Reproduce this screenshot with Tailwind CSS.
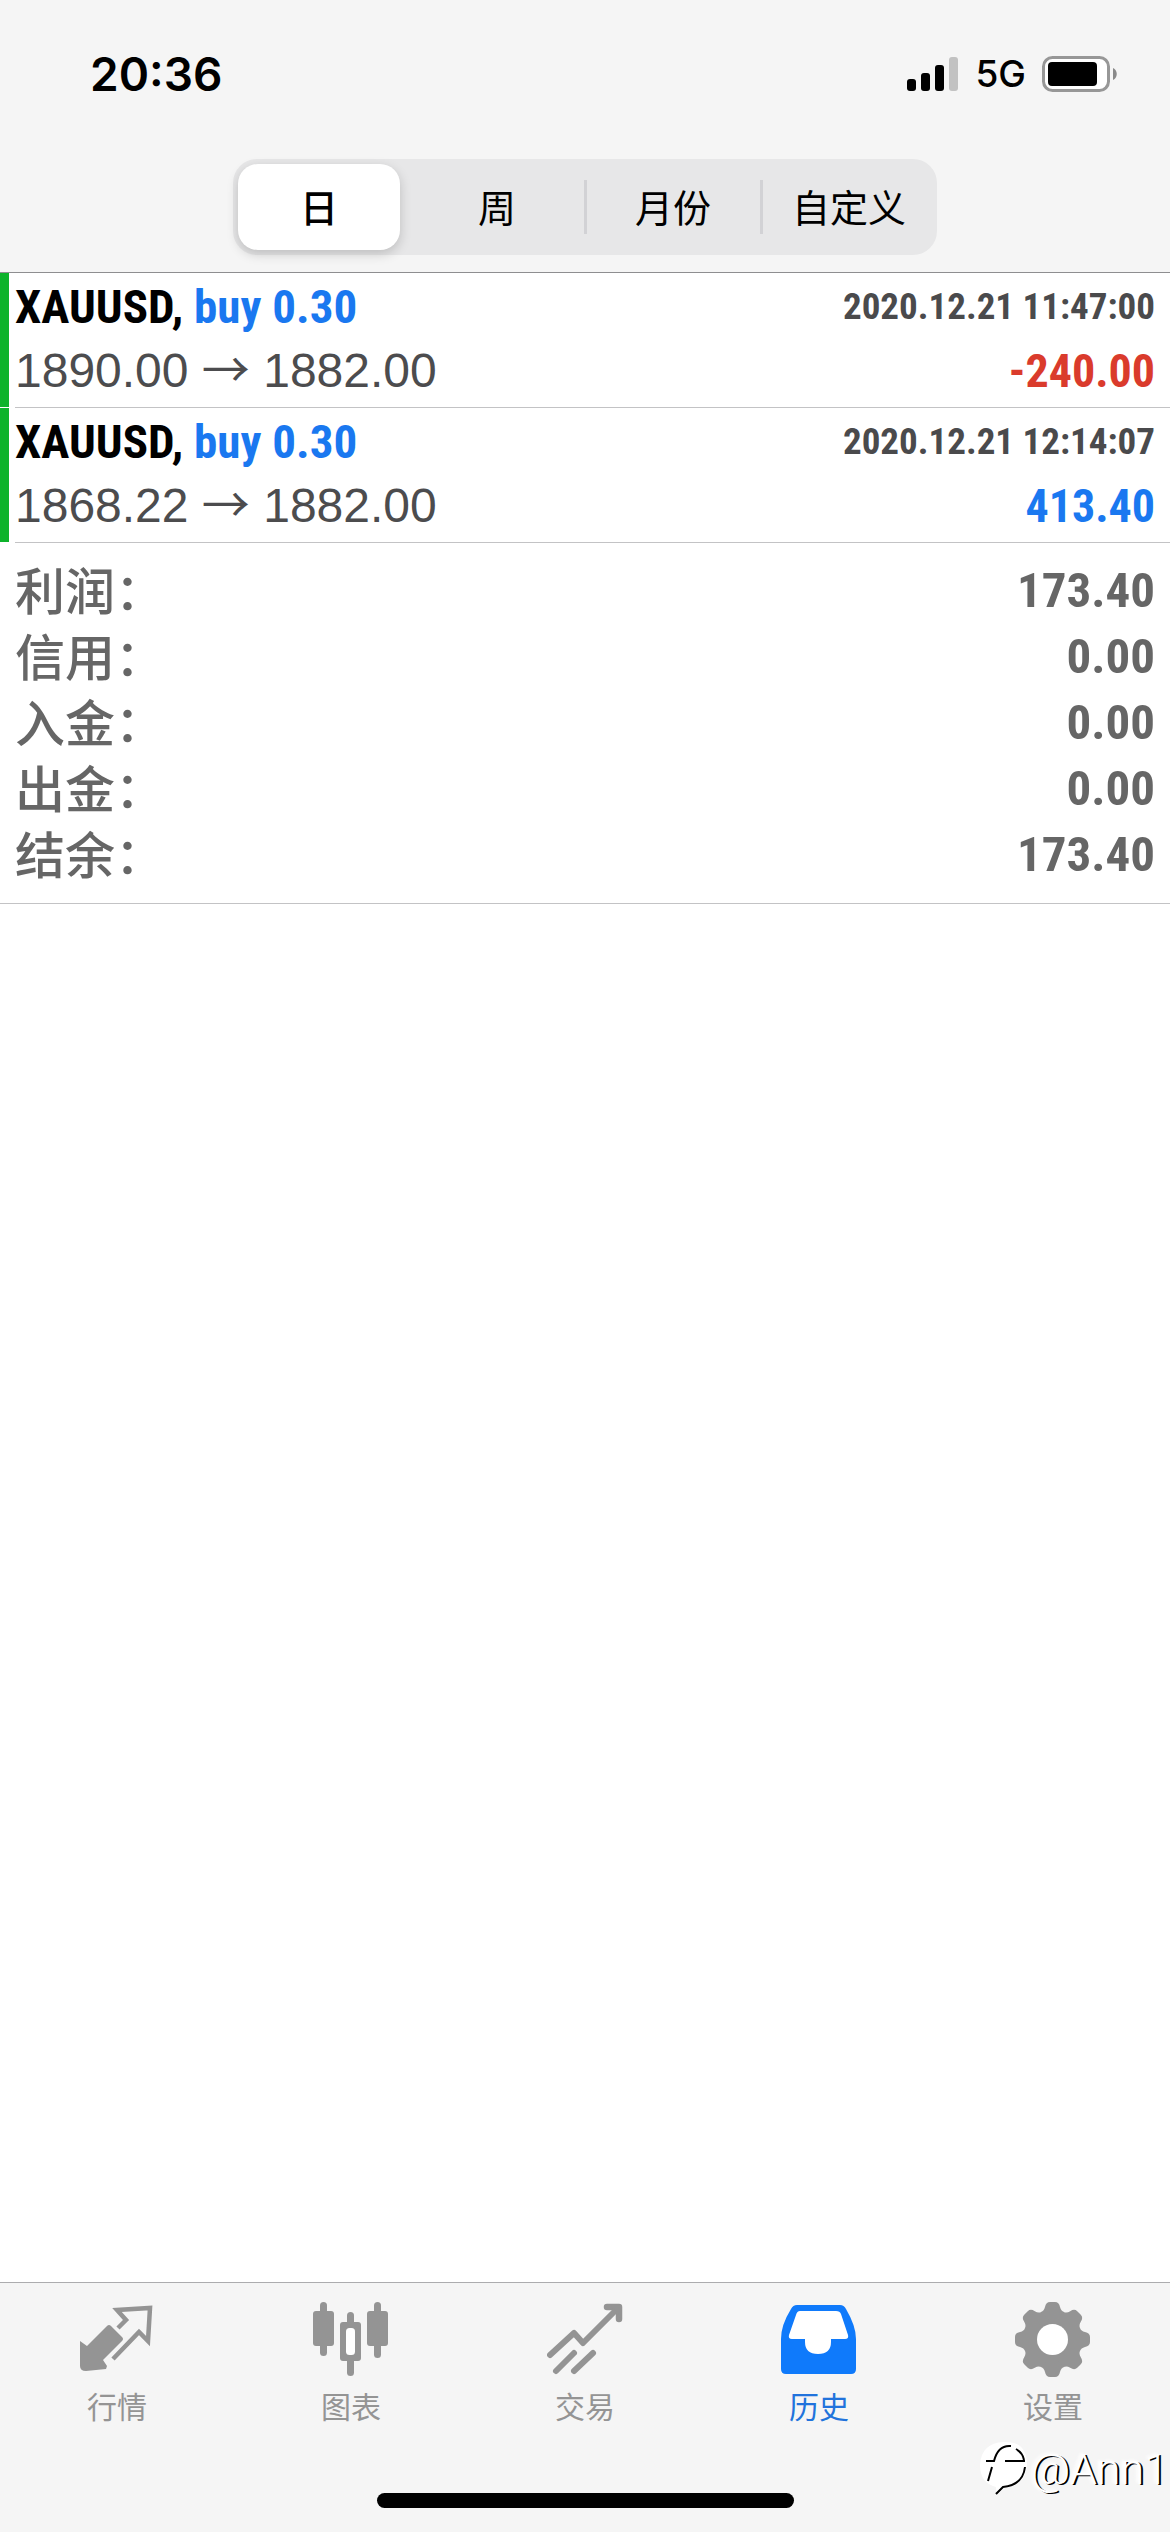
<!DOCTYPE html>
<html lang="zh-CN">
<head>
<meta charset="utf-8">
<meta name="viewport" content="width=device-width, initial-scale=1">
<title>历史</title>
<script src="https://cdn.jsdelivr.net/npm/@tailwindcss/browser@4"></script>
</head>
<body class="flex min-h-screen flex-col bg-white font-['Liberation_Sans','Noto_Sans_CJK_SC',sans-serif] text-black">

<header class="border-b border-[#8e8e90] bg-[#f5f5f5] pb-[17px]">
  <!-- Status bar -->
  <div class="flex items-center justify-between pt-[46px] pr-[52px] pl-[90px] font-['Inter',sans-serif]">
    <time class="text-[46px] leading-[56px] font-semibold">20:36</time>
    <div class="flex items-center">
      <svg class="mr-[16px] h-[36px] w-[52px]" viewBox="0 0 52 36" aria-hidden="true">
        <rect x="0" y="23" width="9" height="12" rx="3"/>
        <rect x="14" y="17" width="9" height="18" rx="3"/>
        <rect x="28" y="9" width="9" height="26" rx="3"/>
        <rect x="42" y="1" width="9" height="34" rx="3" fill="#c2c2c2"/>
      </svg>
      <span class="mr-[16px] text-[37px] leading-[56px] font-medium">5G</span>
      <svg class="h-[36px] w-[76px]" viewBox="0 0 76 36" aria-hidden="true">
        <rect x="1.500" y="1.500" width="65" height="33" rx="9" fill="#fff" stroke="#979797" stroke-width="3"/>
        <rect x="6" y="6" width="49" height="24" rx="4"/>
        <path d="M71 12c5 2 5 10 0 12z" fill="#8a8a8a"/>
      </svg>
    </div>
  </div>
  <!-- Period switch -->
  <div class="mx-auto mt-[57px] grid h-[96px] w-[704px] max-w-full grid-cols-4 rounded-[24px] bg-[#e7e7e8] text-[38px] font-['Noto_Sans_CJK_SC',sans-serif]">
    <button class="my-[5px] mr-[9px] ml-[5px] rounded-[20px] bg-white pb-[4px] font-medium shadow-[0_4px_12px_rgba(0,0,0,0.18)]">日</button>
    <button class="pb-[4px]">周</button>
    <button class="relative pb-[4px] before:absolute before:top-[21px] before:bottom-[21px] before:-left-px before:w-[3px] before:bg-[#d2d2d5]">月份</button>
    <button class="relative pb-[4px] before:absolute before:top-[21px] before:bottom-[21px] before:-left-px before:w-[3px] before:bg-[#d2d2d5]">自定义</button>
  </div>
</header>

<main class="flex-1">
  <ul class="leading-[64px]">
    <li class="flex">
      <div class="mb-px w-[9px] bg-[#0db32b]"></div>
      <div class="ml-[6px] flex-1 border-b border-[#c3c3c5] pt-[2px] pr-[15px] pb-[4px]">
        <div class="flex justify-between font-['Roboto_Condensed','Roboto',sans-serif] font-bold">
          <h2 class="text-[47px]">XAUUSD, <span class="text-[#1a78f0]">buy 0.30</span></h2>
          <time class="text-[37px] text-[#4a4a4c]">2020.12.21 11:47:00</time>
        </div>
        <div class="flex justify-between text-[48px]">
          <p class="text-[#4c4c4e]">1890.00 <span class="font-['Noto_Sans_CJK_SC',sans-serif] leading-none">→</span> 1882.00</p>
          <p class="text-[46px] font-['Roboto_Condensed','Roboto',sans-serif] font-bold text-[#da3b2c]">-240.00</p>
        </div>
      </div>
    </li>
    <li class="flex">
      <div class="mb-px w-[9px] bg-[#0db32b]"></div>
      <div class="ml-[6px] flex-1 border-b border-[#c3c3c5] pt-[2px] pr-[15px] pb-[4px]">
        <div class="flex justify-between font-['Roboto_Condensed','Roboto',sans-serif] font-bold">
          <h2 class="text-[47px]">XAUUSD, <span class="text-[#1a78f0]">buy 0.30</span></h2>
          <time class="text-[37px] text-[#4a4a4c]">2020.12.21 12:14:07</time>
        </div>
        <div class="flex justify-between text-[48px]">
          <p class="text-[#4c4c4e]">1868.22 <span class="font-['Noto_Sans_CJK_SC',sans-serif] leading-none">→</span> 1882.00</p>
          <p class="text-[46px] font-['Roboto_Condensed','Roboto',sans-serif] font-bold text-[#1a78f0]">413.40</p>
        </div>
      </div>
    </li>
  </ul>

  <!-- Totals -->
  <dl class="border-b border-[#c3c3c5] px-[15px] py-[15px] text-[#666]">
    <div class="flex h-[66px] justify-between"><dt class="text-[50px] leading-[60px] font-medium font-['Noto_Sans_CJK_SC',sans-serif]">利润：</dt><dd class="text-[49px] leading-[66px] font-bold font-['Roboto_Condensed','Roboto',sans-serif]">173.40</dd></div>
    <div class="flex h-[66px] justify-between"><dt class="text-[50px] leading-[60px] font-medium font-['Noto_Sans_CJK_SC',sans-serif]">信用：</dt><dd class="text-[49px] leading-[66px] font-bold font-['Roboto_Condensed','Roboto',sans-serif]">0.00</dd></div>
    <div class="flex h-[66px] justify-between"><dt class="text-[50px] leading-[60px] font-medium font-['Noto_Sans_CJK_SC',sans-serif]">入金：</dt><dd class="text-[49px] leading-[66px] font-bold font-['Roboto_Condensed','Roboto',sans-serif]">0.00</dd></div>
    <div class="flex h-[66px] justify-between"><dt class="text-[50px] leading-[60px] font-medium font-['Noto_Sans_CJK_SC',sans-serif]">出金：</dt><dd class="text-[49px] leading-[66px] font-bold font-['Roboto_Condensed','Roboto',sans-serif]">0.00</dd></div>
    <div class="flex h-[66px] justify-between"><dt class="text-[50px] leading-[60px] font-medium font-['Noto_Sans_CJK_SC',sans-serif]">结余：</dt><dd class="text-[49px] leading-[66px] font-bold font-['Roboto_Condensed','Roboto',sans-serif]">173.40</dd></div>
  </dl>
</main>

<footer class="relative border-t border-[#acacae] bg-[#f5f5f5] pt-[17px] pb-[24px]">
  <nav class="grid grid-cols-5 text-[30px] leading-[44px] text-[#949494] font-['Noto_Sans_CJK_SC',sans-serif]">
    <a href="#quotes" class="flex flex-col items-center gap-[5px]">
      <svg class="h-[78px] w-[76px]" viewBox="0 0 76 78" aria-hidden="true">
        <path d="M1 41l7 5 20-20q2-2 4 0l11 11q2 2 0 4L24 60l4 6-1 3-20 2q-6 0-6-5z" fill="#949494"/>
        <path d="M39 28l8-8-9-10 33-2-2 33-9-9-26 27" fill="none" stroke="#949494" stroke-width="4.500"/>
      </svg>
      行情
    </a>
    <a href="#charts" class="flex flex-col items-center gap-[5px]">
      <svg class="h-[78px] w-[76px]" viewBox="0 0 76 78" fill="#949494" aria-hidden="true">
        <rect x="7" y="2" width="7" height="54" rx="3.500"/><rect x="0" y="11" width="21" height="35" rx="3"/>
        <rect x="61" y="2" width="7" height="56" rx="3.500"/><rect x="54" y="11" width="21" height="35" rx="3"/>
        <rect x="34" y="12" width="7" height="64" rx="3.500"/><rect x="27" y="22" width="21" height="39" rx="3"/>
        <rect x="33" y="28" width="9" height="27" rx="3.500" fill="#fff"/>
      </svg>
      图表
    </a>
    <a href="#trade" class="flex flex-col items-center gap-[5px]">
      <svg class="h-[78px] w-[76px]" viewBox="0 0 76 78" fill="none" stroke="#949494" stroke-width="6" stroke-linecap="round" stroke-linejoin="round" aria-hidden="true">
        <path d="M3 55l24-22 9 10L71 8"/>
        <path d="M60 7h12v12" stroke-width="6.500"/>
        <path d="M65 7h8v10z" fill="#949494" stroke-width="2"/>
        <path d="M9 71l18-18M27 71l19-18"/>
      </svg>
      交易
    </a>
    <a href="#history" aria-current="page" class="flex flex-col items-center gap-[5px] text-[#2173dc]">
      <svg class="h-[78px] w-[76px]" viewBox="0 0 76 78" aria-hidden="true">
        <path d="M16 5h43q4 0 6 4 10 17 10 30v30q0 5-5 5H5q-5 0-5-5V39Q0 25 10 9q2-4 6-4z" fill="#0f7afb"/>
        <path d="M19 11h36q4 0 5 3l7 21q1 4-3 4H50v3q0 12-13 12T24 42v-3H11q-4 0-3-4l7-20q1-4 4-4z" fill="#fff"/>
      </svg>
      历史
    </a>
    <a href="#settings" class="flex flex-col items-center gap-[5px]">
      <svg class="h-[78px] w-[76px]" viewBox="0 0 76 78" aria-hidden="true">
        <g fill="#949494">
          <circle cx="37.500" cy="39.500" r="29"/>
          <path id="cog" d="M26 12q3-1 4-5 1-5 5-5h5q4 0 5 5 1 4 4 5v55q-3 1-4 5-1 5-5 5h-5q-4 0-5-5-1-4-4-5z"/>
          <use href="#cog" transform="rotate(45 37.500 39.500)"/>
          <use href="#cog" transform="rotate(90 37.500 39.500)"/>
          <use href="#cog" transform="rotate(135 37.500 39.500)"/>
        </g>
        <circle cx="37.500" cy="39.500" r="15.500" fill="#fff"/>
      </svg>
      设置
    </a>
  </nav>
  <div class="mx-auto mt-[66px] h-[15px] w-[417px] rounded-full bg-black"></div>

  <!-- Watermark -->
  <div class="absolute right-[2px] bottom-[35px] flex items-center gap-[4px]">
    <svg class="h-[56px] w-[48px]" viewBox="0 0 48 56" aria-hidden="true">
      <path d="M1 24Q2 2 25 1t23 23q-1 20-22 23l-9 8v-9Q1 42 1 24z" fill="#fff"/>
      <path d="M7 20h8C17 12 22 4 32 5M26 20h20M37 8q7 4 8 11M46 26q-2 18-22 20l-7 7M13 26L9 40" fill="none" stroke="#000" stroke-width="2"/>
    </svg>
    <span class="text-[43px] leading-[56px] font-light text-white font-['Roboto',sans-serif] [text-shadow:2px_1px_0_#000,-2px_-1px_3px_#fff]">@Ann1</span>
  </div>
</footer>
</body>
</html>
